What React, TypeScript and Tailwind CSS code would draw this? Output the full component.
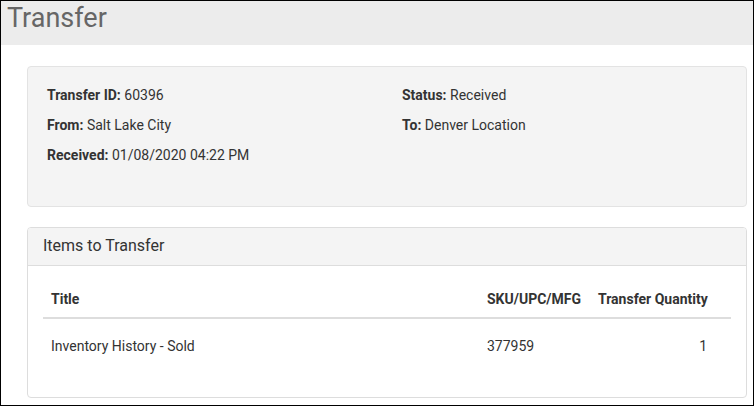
import React from "react";

const details = [
  [
    { label: "Transfer ID:", value: "60396" },
    { label: "From:", value: "Salt Lake City" },
    { label: "Received:", value: "01/08/2020 04:22 PM" },
  ],
  [
    { label: "Status:", value: "Received" },
    { label: "To:", value: "Denver Location" },
  ],
];

const items = [{ title: "Inventory History - Sold", sku: "377959", qty: 1 }];

export default function App() {
  return (
    <div className="w-[754px] h-[406px] border border-black bg-white overflow-hidden font-['Roboto',sans-serif] text-[#333]">
      <div className="h-[44px] bg-[#ececec] pl-[6px] text-[27px] leading-[34px] text-[#666]">Transfer</div>

      <div className="pl-[26px] pr-[6px] pt-[21px]">
        <div className="h-[141px] bg-[#f4f4f4] border border-[#e3e3e3] rounded-[4px] pl-[19px] pt-[18px] flex text-[14px]">
          {details.map((col, i) => (
            <div key={i} className={i === 0 ? "w-[355px]" : "flex-1"}>
              {col.map((d) => (
                <div key={d.label} className="h-[20px] leading-[20px] mb-[10px]">
                  <span className="font-bold">{d.label}</span> {d.value}
                </div>
              ))}
            </div>
          ))}
        </div>

        <div className="mt-[20px] h-[171px] border border-[#ddd] rounded-[4px] overflow-hidden">
          <div className="h-[38px] bg-[#f4f4f4] border-b border-[#ddd] px-[15px] text-[16px] leading-[36px]">
            Items to Transfer
          </div>
          <div className="px-[15px] pt-[15px] text-[14px]">
            <div className="grid grid-cols-[436px_111px_125px_1fr] border-b-2 border-[#ddd] font-bold">
              <div className="px-[8px] py-[8px] leading-[20px]">Title</div>
              <div className="px-[8px] py-[8px] leading-[20px] whitespace-nowrap">SKU/UPC/MFG</div>
              <div className="px-[8px] py-[8px] leading-[20px] text-right whitespace-nowrap">Transfer Quantity</div>
              <div />
            </div>
            {items.map((it) => (
              <div key={it.sku} className="grid grid-cols-[436px_111px_125px_1fr]">
                <div className="px-[8px] pt-[17px] leading-[20px]">{it.title}</div>
                <div className="px-[8px] pt-[17px] leading-[20px]">{it.sku}</div>
                <div className="px-[8px] pt-[17px] leading-[20px] text-right">{it.qty}</div>
                <div />
              </div>
            ))}
          </div>
        </div>
      </div>
    </div>
  );
}
